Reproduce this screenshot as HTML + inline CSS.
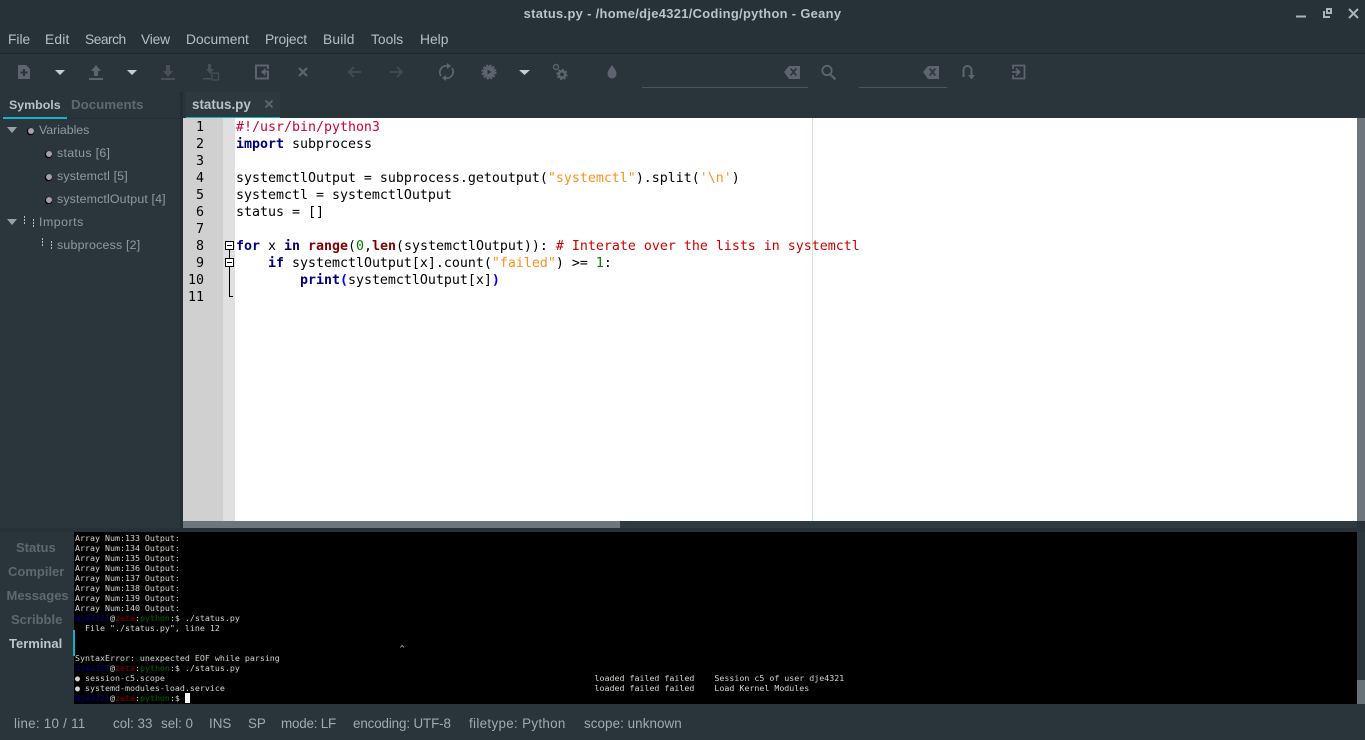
<!DOCTYPE html>
<html><head><meta charset="utf-8"><title>status.py - Geany</title>
<style>
html,body{margin:0;padding:0;width:1365px;height:740px;overflow:hidden;background:#29343b}
body{position:relative;font-family:"Liberation Sans",sans-serif}
.a{position:absolute}
.t{position:absolute;white-space:pre;line-height:20px;height:20px}
.m{font-size:13.8px;color:#b4c0c6;top:30px}
.tr{font-size:12.4px;color:#8f9ba1;letter-spacing:.14px}
.s{font-size:13.4px;color:#9fabb1;top:714px}
.mt{font-size:13px;font-weight:bold;color:#5e696f}
svg{position:absolute;left:0;top:0}
#code{position:absolute;left:236px;top:119px;margin:0;font:13.29px/17px "DejaVu Sans Mono",monospace;color:#000;white-space:pre}
#code b.k{color:#00007f}
#code b.f{color:#7f0000}
#code .st{color:#ff901e}
#code .n{color:#007f00}
#code .c{color:#d00000}
#code .sh{color:#d0003a}
#code b.br{color:#0000ff}
#nums{position:absolute;left:183px;top:119px;width:21px;margin:0;font:13.29px/17px "DejaVu Sans Mono",monospace;color:#000;text-align:right;white-space:pre}
#term{position:absolute;left:75px;top:533px;margin:0;font:8.3px/10px "DejaVu Sans Mono",monospace;color:#d3d7cf;white-space:pre}
#term .u{color:#00008b}#term .h{color:#8b0000}#term .p{color:#006400}
</style></head><body>

<div class="a" style="left:0;top:0;width:1365px;height:53px;background:#263138"></div>
<div class="a" style="left:0;top:53px;width:1365px;height:1px;background:#1f282e"></div>
<div class="t" style="left:0;width:1365px;top:4px;text-align:center;font-size:12.9px;font-weight:bold;color:#b9c3c8;letter-spacing:.33px">status.py - /home/dje4321/Coding/python - Geany</div>

<div class="t m" style="left:8px">File</div>
<div class="t m" style="left:45px;letter-spacing:.2px">Edit</div>
<div class="t m" style="left:85px;letter-spacing:-.5px">Search</div>
<div class="t m" style="left:141px;letter-spacing:-.2px">View</div>
<div class="t m" style="left:186px">Document</div>
<div class="t m" style="left:265px;letter-spacing:-.15px">Project</div>
<div class="t m" style="left:323px;letter-spacing:.2px">Build</div>
<div class="t m" style="left:371px">Tools</div>
<div class="t m" style="left:420px">Help</div>

<svg width="1365" height="118" viewBox="0 0 1365 118">
 <!-- window buttons -->
 <rect x="1296" y="15.500" width="10" height="2" fill="#a9b5bb"/>
 <path d="M1325 11h-2v7h7v-2h-5zM1326 8h6v6h-6zM1328 10v2h2v-2z" fill="#a9b5bb" fill-rule="evenodd"/>
 <path d="M1349 9l9 9M1358 9l-9 9" stroke="#a9b5bb" stroke-width="2" fill="none"/>
 <g fill="#5d646f">
  <!-- new -->
  <path fill-rule="evenodd" d="M18 65h8l4 4v10H18zM23 69v2.500h-2.500v2H23V76h2v-2.500h2.500v-2H25V69z"/>
  <!-- open -->
  <path d="M96 65l5 6h-3v5h-4v-5h-3zM89 78h14v2H89z"/>
  <!-- save -->
  <path d="M166 65h4v6h3l-5 6-5-6h3zM161 78h14v2h-14z" fill="#484f59"/>
  <!-- save all -->
  <path d="M208 64h3v5h3l-4 5-4-5h2zM203 78h8v1.500h-8z" fill="#484f59"/>
  <rect x="212" y="73" width="6.500" height="7" fill="none" stroke="#484f59" stroke-width="1.200"/>
 </g>
 <!-- revert -->
 <path d="M268 69v-3.500h-12v13h12V74" fill="none" stroke="#5d646f" stroke-width="2"/>
 <path d="M261 72l4.500-4v2.500h3.500v7h-2v-5h-1.500V76z" fill="#5d646f"/>
 <path d="M299 68l8 8M307 68l-8 8" stroke="#5d646f" stroke-width="2.200" fill="none"/>
 <g stroke="#3f4a52" stroke-width="2" fill="none">
  <path d="M361 72h-12M354 67l-5 5 5 5"/>
  <path d="M390 72h12M397 67l5 5-5 5"/>
 </g>
 <g fill="none" stroke="#5d646f" stroke-width="1.800">
  <path d="M441 76a6.500 6.500 0 0 1 7-10"/>
  <path d="M452 68a6.500 6.500 0 0 1-7 10"/>
 </g>
 <path d="M447 63l4 3-4 3zM446 75l-4 3 4 3z" fill="#5d646f"/>
 <!-- gear with play -->
 <circle cx="489" cy="72" r="6" fill="#5d646f"/>
 <circle cx="489" cy="72" r="6.800" fill="none" stroke="#5d646f" stroke-width="1.500" stroke-dasharray="2.200 1.400"/>
 <path d="M487.500 69.500v5l4-2.500z" fill="#2c353c"/>
 <circle cx="556" cy="67" r="2.500" fill="none" stroke="#5d646f" stroke-width="1.400"/>
 <circle cx="562" cy="74.500" r="3.200" fill="none" stroke="#5d646f" stroke-width="2.600"/>
 <circle cx="562" cy="74.500" r="5" fill="none" stroke="#5d646f" stroke-width="1.400" stroke-dasharray="2 1.900"/>
 <path d="M612 65c2.500 3.500 4.500 6 4.500 9a4.500 4.500 0 0 1-9 0c0-3 2-5.500 4.500-9z" fill="#5d646f"/>
 <!-- dropdowns -->
 <g fill="#c6ced2">
  <path d="M55 70h10l-5 5zM127 70h10l-5 5zM519 70h11l-5.500 5z"/>
 </g>
 <!-- clear icons -->
 <path fill-rule="evenodd" fill="#5d646f" d="M784 72l5-6h11v13h-11zM790 69l2.500 3-2.500 3 1.300 1 2.200-2.600 2.200 2.600 1.300-1-2.500-3 2.500-3-1.300-1-2.200 2.600-2.200-2.600z"/>
 <path fill-rule="evenodd" fill="#5d646f" d="M923 72l5-6h11v13h-11zM929 69l2.500 3-2.500 3 1.300 1 2.200-2.600 2.200 2.600 1.300-1-2.500-3 2.500-3-1.300-1-2.200 2.600-2.200-2.600z"/>
 <circle cx="827" cy="70.500" r="4.700" fill="none" stroke="#5d646f" stroke-width="1.800"/>
 <path d="M830.500 74.500l5 5" stroke="#5d646f" stroke-width="2.200"/>
 <path d="M963.500 77v-7a4 4 0 0 1 8 0v5" fill="none" stroke="#5d646f" stroke-width="2"/>
 <path d="M968 75h7l-3.500 4.500z" fill="#5d646f"/>
 <path d="M1013 69v-3.500h11.500v13H1013V75" fill="none" stroke="#5d646f" stroke-width="1.800"/>
 <path d="M1012 72h7M1016 68.500l3.500 3.500-3.500 3.500" fill="none" stroke="#5d646f" stroke-width="1.800"/>
 <rect x="642" y="87" width="166" height="1" fill="#4b565c"/>
 <rect x="859" y="87" width="88" height="1" fill="#4b565c"/>
</svg>

<!-- sidebar -->
<div class="a" style="left:180px;top:92px;width:3px;height:437px;background:#232d33"></div>
<div class="a" style="left:0;top:118px;width:180px;height:412px;background:#2b363c"></div>
<div class="a" style="left:0;top:118px;width:180px;height:1px;background:#232d33"></div>
<div class="t" style="left:9px;top:95px;font-size:12.4px;font-weight:bold;color:#b7c2c7">Symbols</div>
<div class="t" style="left:71px;top:95px;font-size:13.3px;font-weight:bold;color:#5e696f">Documents</div>
<div class="a" style="left:3px;top:117px;width:64px;height:2px;background:#16b2c8"></div>

<div class="a" style="left:186px;top:92px;width:94px;height:26px;background:#2e393f"></div>
<div class="t" style="left:192px;top:95px;font-size:13.4px;font-weight:bold;color:#b7c2c7">status.py</div>
<svg width="1365" height="118" viewBox="0 0 1365 118"><path d="M265.500 100.500l7 7M272.500 100.500l-7 7" stroke="#5e696f" stroke-width="1.800"/></svg>
<div class="a" style="left:186px;top:117px;width:94px;height:1px;background:#16b2c8"></div>

<div class="t tr" style="left:39px;top:120px;letter-spacing:-.05px">Variables</div>
<div class="t tr" style="left:57px;top:143px;letter-spacing:.3px">status [6]</div>
<div class="t tr" style="left:57px;top:166px;letter-spacing:.15px">systemctl [5]</div>
<div class="t tr" style="left:57px;top:189px">systemctlOutput [4]</div>
<div class="t tr" style="left:39px;top:212px;letter-spacing:.5px">Imports</div>
<div class="t tr" style="left:57px;top:235px;letter-spacing:.2px">subprocess [2]</div>

<svg width="183" height="260" viewBox="0 0 183 260">
 <path d="M7 127h10l-5 6zM7 219h10l-5 6z" fill="#96a2a8"/>
 <g fill="#000">
  <circle cx="30.500" cy="131.500" r="3.700"/>
  <circle cx="48.500" cy="154.500" r="3.700"/>
  <circle cx="48.500" cy="177.500" r="3.700"/>
  <circle cx="48.500" cy="200.500" r="3.700"/>
 </g>
 <g fill="#a79fb0">
  <circle cx="31" cy="131" r="3"/>
  <circle cx="49" cy="154" r="3"/>
  <circle cx="49" cy="177" r="3"/>
  <circle cx="49" cy="200" r="3"/>
 </g>
 <g stroke="#b8c0c4" stroke-width="1" stroke-dasharray="2 1" fill="none">
  <path d="M24.500 216v9M33.500 219v9M42.500 238v9M51.500 241v9"/>
 </g>
</svg>

<!-- editor -->
<div class="a" style="left:183px;top:118px;width:1174px;height:403px;background:#fff"></div>
<div class="a" style="left:183px;top:118px;width:40px;height:403px;background:#d0d0d0"></div>
<div class="a" style="left:223px;top:118px;width:12px;height:403px;background:#e0e0e0"></div>
<div class="a" style="left:812px;top:118px;width:1px;height:403px;background:#c9e8c9"></div>
<div class="a" style="left:1357px;top:118px;width:8px;height:403px;background:#6c767b"></div>
<pre id="nums">1
2
3
4
5
6
7
8
9
10
11</pre>
<svg width="260" height="310" viewBox="0 0 260 310">
 <path d="M229.500 249v9M229.500 267v29.500H233" fill="none" stroke="#000" stroke-width="1"/>
 <rect x="225.500" y="241.500" width="8" height="8" fill="#fff" stroke="#000"/>
 <path d="M227 245.500h5" stroke="#000"/>
 <rect x="225.500" y="258.500" width="8" height="8" fill="#fff" stroke="#000"/>
 <path d="M227 262.500h5" stroke="#000"/>
</svg>
<pre id="code"><span class="sh">#!/usr/bin/python3</span>
<b class="k">import</b> subprocess

systemctlOutput = subprocess.getoutput(<span class="st">"systemctl"</span>).split(<span class="st">'\n'</span>)
systemctl = systemctlOutput
status = []

<b class="k">for</b> x <b class="k">in</b> <b class="f">range</b>(<span class="n">0</span>,<b class="f">len</b>(systemctlOutput)): <span class="c"># Interate over the lists in systemctl</span>
    <b class="k">if</b> systemctlOutput[x].count(<span class="st">"failed"</span>) &gt;= <span class="n">1</span>:
        <b class="k">print</b><b class="br">(</b>systemctlOutput[x]<b class="br">)</b>
</pre>

<!-- horizontal scrollbar -->
<div class="a" style="left:183px;top:521px;width:1182px;height:7px;background:#2e3a40"></div>
<div class="a" style="left:183px;top:521px;width:437px;height:7px;background:#6c767b"></div>
<div class="a" style="left:1357px;top:521px;width:8px;height:7px;background:#263138"></div>
<div class="a" style="left:0;top:528px;width:1365px;height:4px;background:#263138"></div>

<!-- message window -->
<div class="a" style="left:74px;top:532px;width:1283px;height:172px;background:#000"></div>
<div class="a" style="left:1357px;top:532px;width:8px;height:172px;background:#2b363c"></div>
<div class="a" style="left:1357px;top:680px;width:8px;height:24px;background:#677277"></div>
<div class="a" style="left:73px;top:630px;width:2px;height:26px;background:#16b2c8"></div>
<div class="t mt" style="left:16px;top:538px">Status</div>
<div class="t mt" style="left:8px;top:562px">Compiler</div>
<div class="t mt" style="left:6.500px;top:586px">Messages</div>
<div class="t mt" style="left:11px;top:610px">Scribble</div>
<div class="t mt" style="left:9px;top:634px;color:#bcc6cb">Terminal</div>
<pre id="term">Array Num:133 Output:
Array Num:134 Output:
Array Num:135 Output:
Array Num:136 Output:
Array Num:137 Output:
Array Num:138 Output:
Array Num:139 Output:
Array Num:140 Output:
<span class="u">dje4321</span>@<span class="h">zeta</span>:<span class="p">python</span>:$ ./status.py
  File "./status.py", line 12

                                                                 ^
SyntaxError: unexpected EOF while parsing
<span class="u">dje4321</span>@<span class="h">zeta</span>:<span class="p">python</span>:$ ./status.py
● session-c5.scope                                                                                      loaded failed failed    Session c5 of user dje4321
● systemd-modules-load.service                                                                          loaded failed failed    Load Kernel Modules
<span class="u">dje4321</span>@<span class="h">zeta</span>:<span class="p">python</span>:$ </pre>
<div class="a" style="left:185px;top:693px;width:5px;height:10px;background:#fff"></div>

<!-- status bar -->
<div class="t s" style="left:14px;letter-spacing:.25px">line: 10 / 11</div>
<div class="t s" style="left:113px">col: 33</div>
<div class="t s" style="left:161px">sel: 0</div>
<div class="t s" style="left:209px">INS</div>
<div class="t s" style="left:248px">SP</div>
<div class="t s" style="left:281px;letter-spacing:-.2px">mode: LF</div>
<div class="t s" style="left:353px;letter-spacing:-.13px">encoding: UTF-8</div>
<div class="t s" style="left:469px;letter-spacing:.32px">filetype: Python</div>
<div class="t s" style="left:584px;letter-spacing:.07px">scope: unknown</div>
</body></html>
